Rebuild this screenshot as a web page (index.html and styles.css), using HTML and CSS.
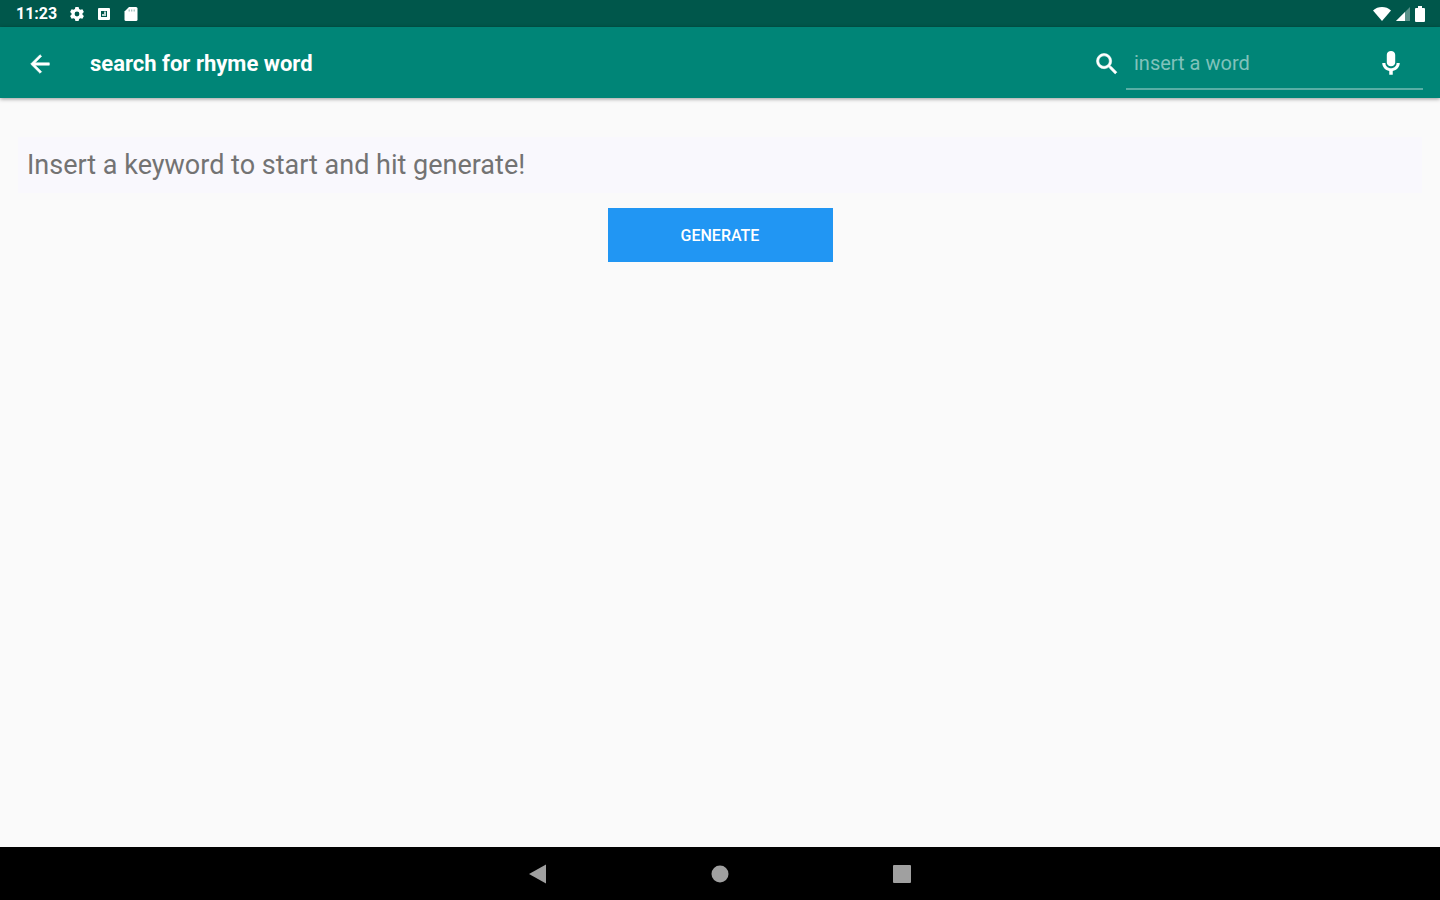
FILE: index.html
```html
<!DOCTYPE html>
<html lang="en">
<head>
    <meta charset="UTF-8">
    <meta name="viewport" content="width=device-width, initial-scale=1.0">
    <title>search for rhyme word</title>
    <link rel="stylesheet" href="styles.css">
</head>
<body>
    <div class="status-bar">
        <div class="status-left">
            <span class="clock">11:23</span>
            <!-- settings -->
            <svg class="status-icon" viewBox="0 0 14 16">
                <path fill-rule="evenodd" d="M5.4 1h3.2l.5 2 1.3.8 2-.6 1.5 2.7-1.4 1.4v1.4l1.4 1.4-1.5 2.7-2-.6-1.3.8-.5 2H5.4l-.5-2-1.3-.8-2 .6L.1 10.100l1.400-1.400V7.300L.1 5.900l1.500-2.700 2 .6L4.900 3zM7 5.600a2.400 2.400 0 1 0 0 4.800 2.400 2.400 0 0 0 0-4.800z"/>
            </svg>
            <!-- keyboard -->
            <svg class="status-icon" viewBox="0 0 14 16">
                <path fill-rule="evenodd" d="M2 2h10a1 1 0 0 1 1 1v10a1 1 0 0 1-1 1H2a1 1 0 0 1-1-1V3a1 1 0 0 1 1-1zM4 5v6h6V5z"/>
                <path d="M7 5.500h2V10H5V8h2z" opacity=".75"/>
            </svg>
            <!-- sd card -->
            <svg class="status-icon" viewBox="0 0 14 16">
                <path d="M5 1h7a1.500 1.500 0 0 1 1.500 1.500v11A1.500 1.500 0 0 1 12 15H2a1.500 1.500 0 0 1-1.500-1.500v-8z"/>
                <path class="sd-pins" d="M4.600 3.500h1.200v2H4.600zm2.500 0h1.200v2H7.100zm2.500 0h1.200v2H9.600z"/>
            </svg>
        </div>
        <div class="status-right">
            <svg class="wifi" viewBox="0 0 18 16"><path d="M0 4.500C5-.1 13-.1 18 4.500L9 15z"/></svg>
            <svg class="signal" viewBox="0 0 16 16">
                <path d="M15 1v14H1z" opacity=".35"/>
                <path d="M10 6v9H1z"/>
            </svg>
            <svg class="battery" viewBox="0 0 10 16"><path d="M3 0h4v2h2q1 0 1 1v12q0 1-1 1H1q-1 0-1-1V3q0-1 1-1h2z"/></svg>
        </div>
    </div>

    <header class="toolbar">
        <button class="icon-btn" type="button" aria-label="Back">
            <svg class="bold" viewBox="0 0 24 24"><path d="M20 11H7.830l5.590-5.590L12 4l-8 8 8 8 1.410-1.410L7.830 13H20v-2z"/></svg>
        </button>
        <h1 class="title">search for rhyme word</h1>
        <form class="search">
            <label class="search-label" for="word" aria-label="Search">
                <svg class="bold" viewBox="0 0 24 24"><path d="M15.500 14h-.79l-.28-.27A6.471 6.471 0 0 0 16 9.500 6.500 6.500 0 1 0 9.500 16c1.610 0 3.090-.59 4.230-1.570l.27.28v.79l5 4.990L20.490 19l-4.990-5zm-6 0C7.010 14 5 11.990 5 9.500S7.010 5 9.500 5 14 7.010 14 9.500 11.990 14 9.500 14z"/></svg>
            </label>
            <div class="search-field">
                <input class="search-input" id="word" type="text" placeholder="insert a word">
                <button class="icon-btn mic" type="button" aria-label="Voice search">
                    <svg viewBox="0 0 24 24"><path d="M12 14.800c2 0 3.600-1.500 3.600-3.300V5c0-1.800-1.600-3.200-3.600-3.200S8.400 3.200 8.400 5v6.500c0 1.800 1.600 3.300 3.600 3.300zm4.800-2.800c0 2.700-2.200 4.500-4.800 4.500S7.200 14.700 7.200 12H4.500c0 3.400 2.600 6.200 6 6.800V22h3v-3.200c3.400-.6 6-3.400 6-6.800h-2.700z"/></svg>
                </button>
            </div>
        </form>
    </header>

    <main class="content">
        <p class="hint">Insert a keyword to start and hit generate!</p>
        <button class="generate" type="button">GENERATE</button>
    </main>

    <nav class="nav-bar">
        <button class="nav-btn" type="button" aria-label="Back">
            <svg viewBox="0 0 20 20"><path d="M18 0.500v19L1 10z"/></svg>
        </button>
        <button class="nav-btn" type="button" aria-label="Home">
            <svg viewBox="0 0 20 20"><circle cx="10" cy="10" r="8.500"/></svg>
        </button>
        <button class="nav-btn" type="button" aria-label="Recent apps">
            <svg viewBox="0 0 20 20"><rect x="1" y="1" width="18" height="18" rx="1"/></svg>
        </button>
    </nav>
</body>
</html>
```
FILE: styles.css
```css
* {
    margin: 0;
    padding: 0;
    box-sizing: border-box;
}
body {
    font-family: Roboto, 'Liberation Sans', sans-serif;
    background-color: #fafafa;
    display: flex;
    flex-direction: column;
    min-height: 100vh;
}
svg {
    display: block;
    fill: currentColor;
}
button {
    border: none;
    background: none;
    color: inherit;
    font-family: inherit;
    cursor: pointer;
}

/* status bar */
.status-bar {
    display: flex;
    justify-content: space-between;
    align-items: center;
    height: 27px;
    padding: 0 15px 0 16px;
    background-color: #00574b;
    color: #fff;
}
.status-left {
    display: flex;
    align-items: center;
    gap: 13px;
}
.clock {
    font-size: 16px;
    font-weight: 700;
}
.status-icon {
    width: 14px;
    height: 16px;
}
.sd-pins {
    fill: #00574b;
    opacity: 0.4;
}
.status-right {
    display: flex;
    align-items: center;
    gap: 4px;
}
.wifi {
    width: 18px;
    height: 16px;
}
.signal {
    width: 16px;
    height: 16px;
}
.battery {
    width: 10px;
    height: 16px;
}

/* toolbar */
.toolbar {
    display: flex;
    align-items: center;
    height: 71px;
    padding: 2px 17px 0 18px;
    background-color: #008577;
    color: #fff;
    box-shadow: 0 1px 4px rgba(0, 0, 0, 0.4);
}
.icon-btn {
    padding: 8px;
}
.icon-btn svg,
.search-label svg {
    width: 28px;
    height: 28px;
}
.bold {
    stroke: currentColor;
    stroke-width: 0.5;
}
.title {
    flex: 1;
    margin-left: 28px;
    font-size: 22px;
    font-weight: 700;
}
.search {
    display: flex;
    align-items: center;
}
.search-label {
    padding: 0 5px;
}
.search-field {
    display: flex;
    align-items: center;
    width: 297px;
    height: 52px;
    border-bottom: 2px solid #59aea5;
}
.search-input {
    flex: 1;
    min-width: 0;
    padding: 0 8px;
    border: none;
    outline: none;
    background: none;
    color: #fff;
    font-family: inherit;
    font-size: 20px;
}
.search-input::placeholder {
    color: #80c2bb;
}
.mic {
    margin-right: 10px;
}

/* content */
.content {
    flex: 1;
    display: flex;
    flex-direction: column;
    align-items: center;
    gap: 15px;
    padding: 39px 18px;
}
.hint {
    width: 100%;
    padding: 0 9px;
    background-color: #f9f8fd;
    color: #737373;
    font-size: 27px;
    line-height: 56px;
}
.generate {
    width: 225px;
    height: 54px;
    background-color: #2196f3;
    color: #fff;
    font-size: 16px;
    font-weight: 500;
}

/* navigation bar */
.nav-bar {
    display: flex;
    justify-content: center;
    align-items: center;
    gap: 126px;
    height: 53px;
    background-color: #000;
    color: #a0a0a0;
}
.nav-btn {
    padding: 18px;
}
.nav-btn svg {
    width: 20px;
    height: 20px;
}
```
